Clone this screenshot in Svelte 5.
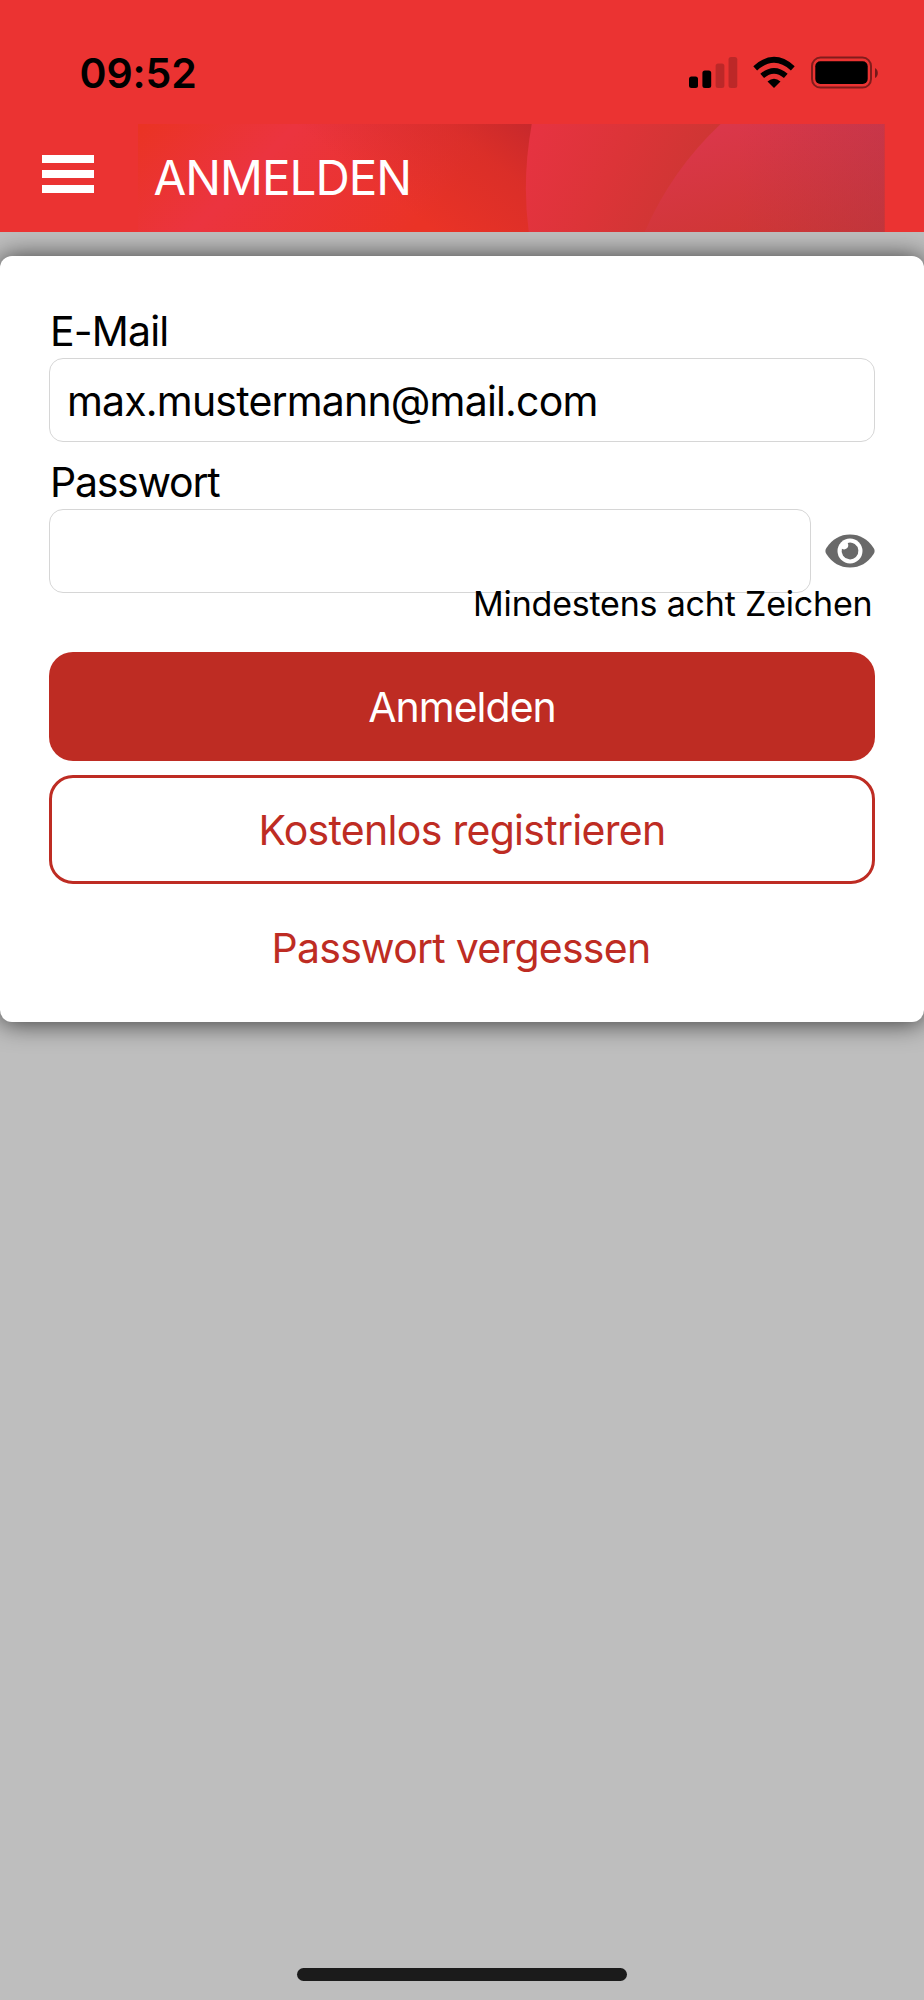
<script lang="ts">
	let email = 'max.mustermann@mail.com';
	let password = '';
	let showPassword = false;
</script>

<div class="screen">
	<header>
		<div class="status">
			<span class="time">09:52</span>
			<svg class="indicators" viewBox="0 0 190 34" width="190" height="34">
				<rect x="0" y="20.5" width="9" height="11.5" rx="2.5" />
				<rect x="13.4" y="14.5" width="8.8" height="17.5" rx="2.5" />
				<rect x="26.6" y="7.5" width="8.8" height="24.5" rx="2.5" opacity="0.2" />
				<rect x="39.5" y="1" width="8.8" height="31" rx="2.5" opacity="0.2" />
				<g fill="none" stroke="#000" stroke-width="5.7">
					<path d="M66.2 12.3Q85 -4.6 103.8 12.3" />
					<path d="M73.2 19.9Q85 9.8 96.8 19.9" />
				</g>
				<path d="M78.5 25.6Q85 20 91.500 25.6L85 32Z" />
				<rect x="123" y="1.6" width="59" height="30" rx="8.5" fill="none" stroke="#000" stroke-width="2" opacity="0.45" />
				<rect x="126.3" y="5.2" width="52.4" height="22.8" rx="5" />
				<path d="M186 12Q188.8 13.500 188.8 17T186 22Z" opacity="0.5" />
			</svg>
		</div>
		<div class="navbar">
			<button class="menu" type="button" aria-label="Menü">
				<span></span>
				<span></span>
				<span></span>
			</button>
			<div class="banner">
				<svg class="waves" viewBox="0 0 747 108" preserveAspectRatio="none">
					<defs>
						<linearGradient id="base" gradientUnits="userSpaceOnUse" x1="0" y1="0" x2="190" y2="190">
							<stop offset="0" stop-color="#ea3323" />
							<stop offset="0.42" stop-color="#eb343f" />
							<stop offset="1" stop-color="#ea3326" />
						</linearGradient>
						<linearGradient id="shade" gradientUnits="userSpaceOnUse" x1="300" y1="110" x2="392" y2="-10">
							<stop offset="0" stop-color="#c4282d" stop-opacity="0" />
							<stop offset="0.6" stop-color="#c8292b" stop-opacity="0.45" />
							<stop offset="1" stop-color="#c4282d" />
						</linearGradient>
						<linearGradient id="mid" gradientUnits="userSpaceOnUse" x1="395" y1="10" x2="550" y2="85">
							<stop offset="0" stop-color="#e63341" />
							<stop offset="0.5" stop-color="#dc3438" />
							<stop offset="1" stop-color="#cd3633" />
						</linearGradient>
						<linearGradient id="far" gradientUnits="userSpaceOnUse" x1="610" y1="-10" x2="650" y2="130">
							<stop offset="0" stop-color="#db374b" />
							<stop offset="1" stop-color="#cc3630" />
						</linearGradient>
						<linearGradient id="edge" gradientUnits="userSpaceOnUse" x1="600" y1="0" x2="747" y2="0">
							<stop offset="0" stop-color="#a8355a" stop-opacity="0" />
							<stop offset="1" stop-color="#a8355a" stop-opacity="0.3" />
						</linearGradient>
					</defs>
					<rect width="747" height="108" fill="url(#base)" />
					<rect width="400" height="108" fill="url(#shade)" />
					<path d="M394 0Q384 56 391 108H747V0Z" fill="url(#mid)" />
					<path d="M583 0Q534 46 507 108H747V0Z" fill="url(#far)" />
					<path d="M583 0Q534 46 507 108H747V0Z" fill="url(#edge)" />
				</svg>
				<h1>ANMELDEN</h1>
			</div>
		</div>
	</header>

	<main>
		<form class="card" on:submit|preventDefault>
			<label class="email-label" for="email">E-Mail</label>
			<input id="email" type="text" bind:value={email} />

			<label for="password">Passwort</label>
			<div class="password-row">
				<input id="password" type={showPassword ? 'text' : 'password'} value={password} />
				<button class="toggle" type="button" aria-label="Passwort anzeigen" on:click={() => (showPassword = !showPassword)}>
					<svg viewBox="0 0 50 34" width="50" height="34">
						<path fill="#696969" d="M25 .5C35 .5 42.5 5 48.6 14Q50.6 17 48.6 20C42.5 29 35 33.5 25 33.5S7.5 29 1.400 20Q-.6 17 1.400 14C7.5 5 15 .5 25 .5Z" />
						<circle cx="25" cy="17" r="12.5" fill="#fff" />
						<path fill="#696969" d="M22.7 8.9A8.4 8.4 0 1 1 16.9 14.7Q19.6 16.3 21.9 14.3T22.7 8.9Z" />
					</svg>
				</button>
			</div>
			<p class="hint">Mindestens acht Zeichen</p>

			<button class="btn primary" type="submit">Anmelden</button>
			<button class="btn outline" type="button">Kostenlos registrieren</button>
			<button class="forgot" type="button">Passwort vergessen</button>
		</form>
	</main>

	<div class="home-indicator"></div>
</div>

<style>
	:global(body) {
		margin: 0;
		background: #bebebe;
	}

	.screen {
		display: flex;
		flex-direction: column;
		width: 924px;
		height: 2000px;
		overflow: hidden;
		background: #bebebe;
		font-family: Inter, 'Liberation Sans', sans-serif;
		font-size: 41px;
		color: #000;
	}

	button {
		margin: 0;
		padding: 0;
		border: none;
		background: none;
		font: inherit;
	}

	header {
		position: relative;
		z-index: 1;
		height: 231.5px;
		background: #eb3332;
	}

	.status {
		display: flex;
		justify-content: space-between;
		box-sizing: border-box;
		height: 123.5px;
		padding: 48px 45px 0 79.5px;
	}

	.time {
		font-weight: 600;
		line-height: 50px;
		letter-spacing: -0.1px;
	}

	.indicators {
		margin-top: 8px;
	}

	.navbar {
		display: flex;
		height: 108px;
	}

	.menu {
		display: flex;
		flex-direction: column;
		gap: 7px;
		width: 52px;
		margin: 31.5px 44px 0 42px;
	}

	.menu span {
		height: 8px;
		background: #fff;
	}

	.banner {
		position: relative;
		width: 746.5px;
	}

	.waves {
		position: absolute;
		inset: 0;
		width: 100%;
		height: 100%;
	}

	h1 {
		position: relative;
		margin: 0;
		padding: 24px 0 0 15.5px;
		font-size: 47.5px;
		font-weight: 400;
		line-height: 60px;
		letter-spacing: -1px;
		color: #fff;
	}

	main {
		flex: 1;
		padding-top: 24.5px;
	}

	.card {
		display: flex;
		flex-direction: column;
		box-sizing: border-box;
		height: 766px;
		padding: 51px 49px 0;
		border-radius: 12px;
		background: #fff;
		box-shadow: 0 1px 26px rgba(0, 0, 0, 0.72);
	}

	label {
		padding-left: 1px;
		line-height: 48px;
		margin-bottom: 3px;
		letter-spacing: -1.25px;
	}

	.email-label {
		letter-spacing: -0.85px;
	}

	input {
		box-sizing: border-box;
		width: 100%;
		height: 84px;
		padding: 1px 17px 0;
		border: 1px solid #d6d6d6;
		border-radius: 14px;
		background: #fff;
		font: inherit;
		letter-spacing: -0.82px;
		color: #000;
		outline: none;
	}

	#email {
		margin-bottom: 16px;
	}

	.password-row {
		display: flex;
		align-items: center;
		gap: 14px;
	}

	.password-row input {
		flex: 1;
		min-width: 0;
	}

	.toggle {
		display: flex;
	}

	.hint {
		position: relative;
		margin: -9px 2.5px 28px 0;
		font-size: 34px;
		line-height: 40px;
		letter-spacing: -0.2px;
		text-align: right;
	}

	.btn {
		box-sizing: border-box;
		height: 108.5px;
		margin-bottom: 14.5px;
		padding-top: 2px;
		border-radius: 24px;
	}

	.primary {
		background: #be2c23;
		letter-spacing: -0.97px;
		color: #fff;
	}

	.outline {
		border: 3px solid #be2c23;
		letter-spacing: -0.7px;
		color: #be2c23;
	}

	.forgot {
		margin-top: 26px;
		padding-right: 2px;
		line-height: 48px;
		letter-spacing: -0.75px;
		color: #be2c23;
	}

	.home-indicator {
		width: 330px;
		height: 13px;
		margin: 0 auto 19px;
		border-radius: 7px;
		background: #1b1b1b;
	}
</style>
